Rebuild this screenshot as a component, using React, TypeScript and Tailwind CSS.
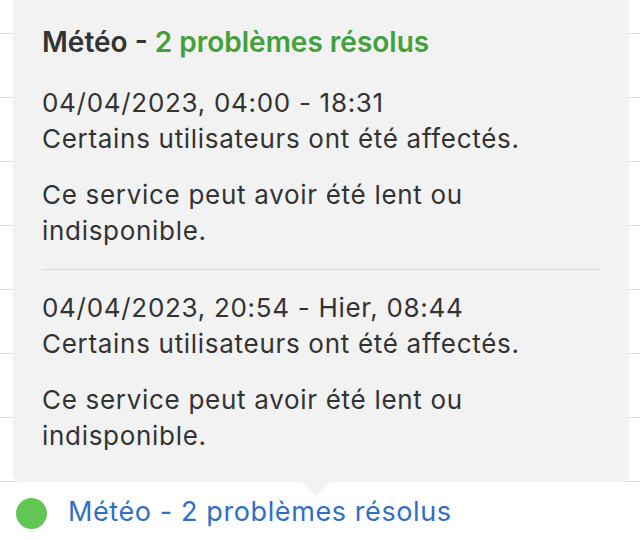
import type { ReactElement } from "react";

type Incident = {
  period: string;
  impact: string;
  detail: string;
};

const incidents: Incident[] = [
  {
    period: "04/04/2023, 04:00 - 18:31",
    impact: "Certains utilisateurs ont été affectés.",
    detail: "Ce service peut avoir été lent ou indisponible.",
  },
  {
    period: "04/04/2023, 20:54 - Hier, 08:44",
    impact: "Certains utilisateurs ont été affectés.",
    detail: "Ce service peut avoir été lent ou indisponible.",
  },
];

const font = { fontFamily: "Inter, Roboto, sans-serif" };

function IncidentBlock({ item }: { item: Incident }): ReactElement {
  return (
    <div className="text-[26px] leading-[36px] tracking-[0.7px] text-[#333333]">
      <p>{item.period}</p>
      <p>{item.impact}</p>
      <p className="mt-[20px] pr-[110px]">{item.detail}</p>
    </div>
  );
}

export default function App(): ReactElement {
  return (
    <div
      className="relative h-[540px] w-[640px] overflow-hidden bg-white"
      style={font}
    >
      {/* list rows behind the popover */}
      <div className="flex flex-col">
        <div className="h-[34px] border-b border-[#dcdcdc]" />
        {Array.from({ length: 7 }).map((_, i) => (
          <div key={i} className="h-[64px] border-b border-[#dcdcdc]" />
        ))}
        <div className="flex h-[60px] items-center gap-[21px] pl-[16px]">
          <span className="mt-[3px] h-[31px] w-[31px] shrink-0 rounded-full bg-[#62c554]" />
          <span className="text-[27px] tracking-[0.6px] text-[#2f6fc6]">
            Météo - 2 problèmes résolus
          </span>
        </div>
      </div>

      {/* popover */}
      <div className="absolute left-[13px] top-0 w-[616px]">
        <div className="rounded-b-[7px] bg-[#f2f2f2] pl-[29px] pr-[28px] pt-[24px] pb-[28px]">
          <h3 className="text-[28px] font-semibold leading-[36px] text-[#333333]">
            Météo - <span className="text-[#43a03b]">2 problèmes résolus</span>
          </h3>
          <div className="mt-[25px]">
            <IncidentBlock item={incidents[0]} />
          </div>
          <div className="my-[20px] h-px bg-[#dadada]" />
          <IncidentBlock item={incidents[1]} />
        </div>
        <div className="ml-[289px] h-0 w-0 border-x-[14px] border-t-[14px] border-x-transparent border-t-[#f2f2f2]" />
      </div>
    </div>
  );
}
